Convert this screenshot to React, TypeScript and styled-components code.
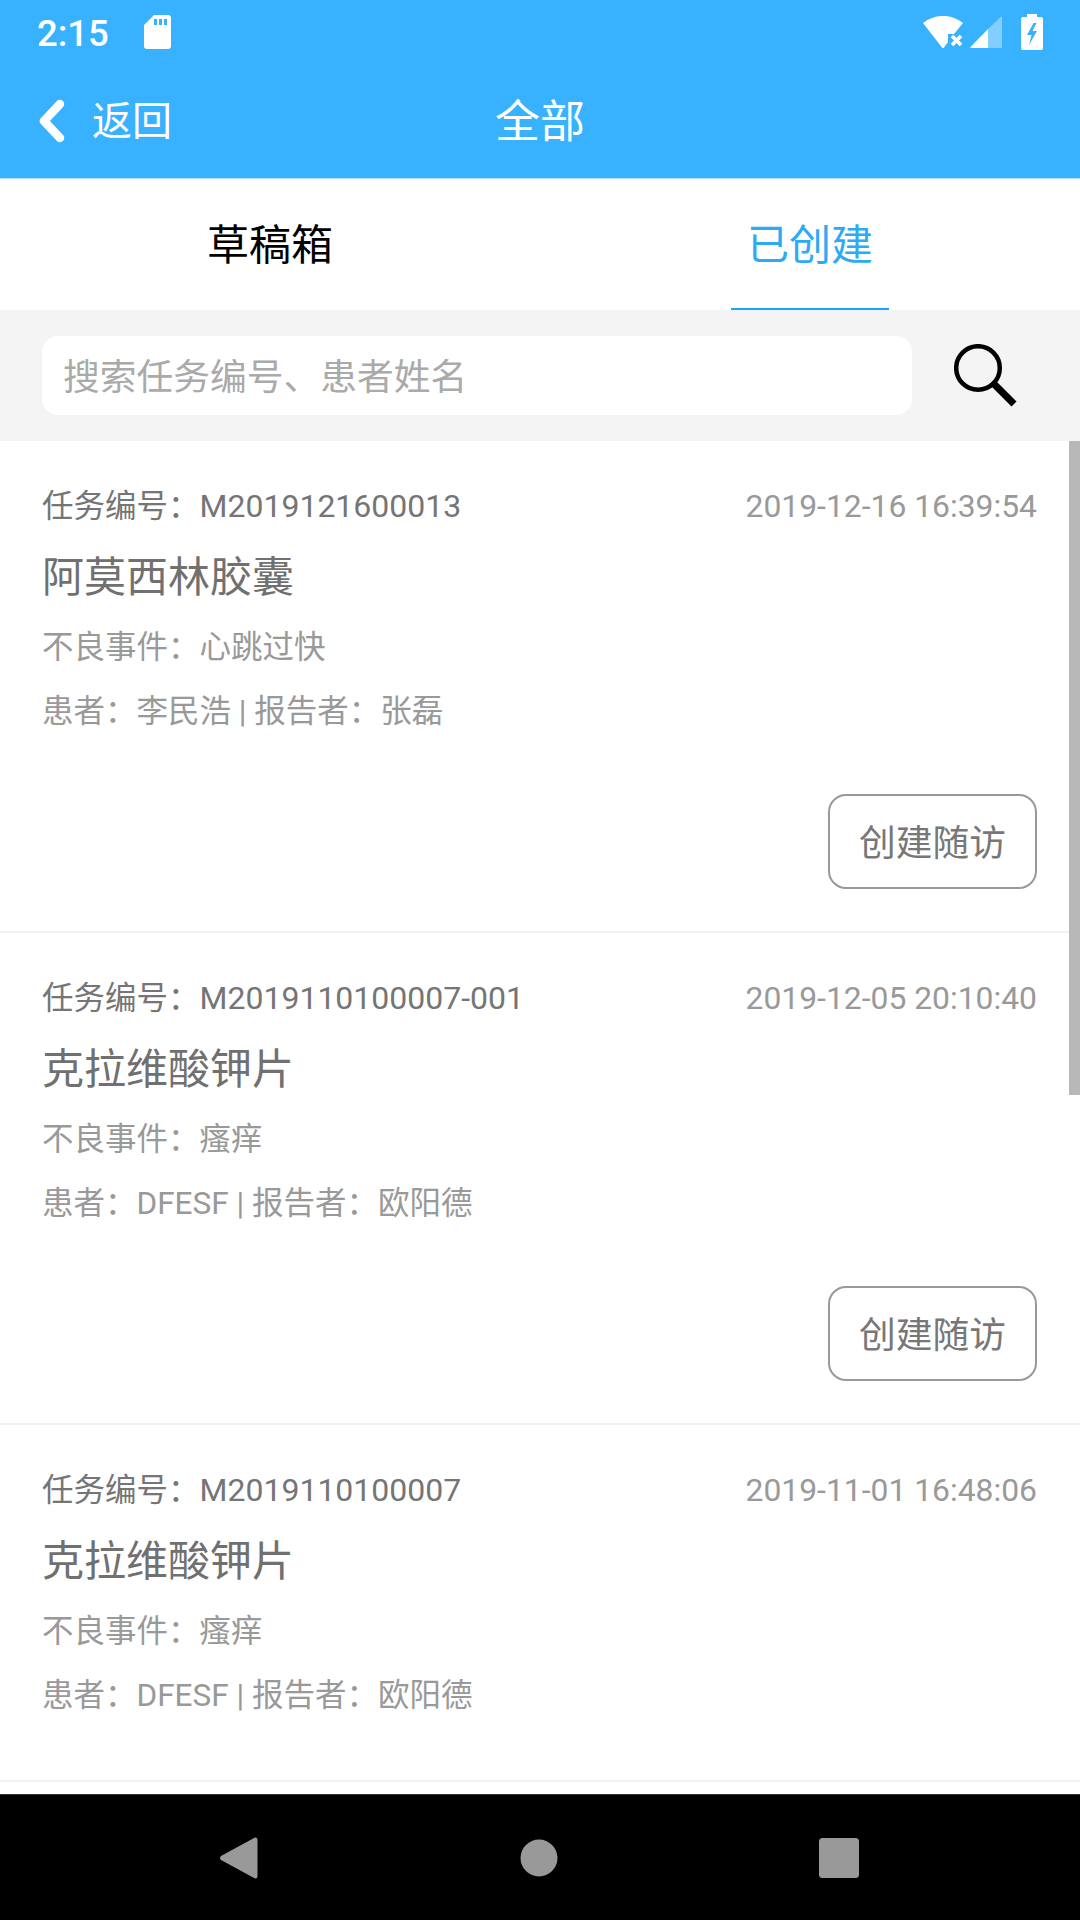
import styled, { createGlobalStyle } from "styled-components";

const GlobalStyle = createGlobalStyle`
  html, body {
    margin: 0;
    padding: 0;
    background: #fff;
  }

  body {
    font-family: Roboto, "Noto Sans CJK SC", sans-serif;
  }
`;

interface Task {
  id: string;
  date: string;
  drug: string;
  event: string;
  patient: string;
  reporter: string;
  followUp: boolean;
}

const tasks: Task[] = [
  {
    id: "M2019121600013",
    date: "2019-12-16 16:39:54",
    drug: "阿莫西林胶囊",
    event: "心跳过快",
    patient: "李民浩",
    reporter: "张磊",
    followUp: true,
  },
  {
    id: "M2019110100007-001",
    date: "2019-12-05 20:10:40",
    drug: "克拉维酸钾片",
    event: "瘙痒",
    patient: "DFESF",
    reporter: "欧阳德",
    followUp: true,
  },
  {
    id: "M2019110100007",
    date: "2019-11-01 16:48:06",
    drug: "克拉维酸钾片",
    event: "瘙痒",
    patient: "DFESF",
    reporter: "欧阳德",
    followUp: false,
  },
];

export default function App() {
  return (
    <Screen lang="zh-CN">
      <GlobalStyle />
      <Header>
        <StatusBar>
          <StatusLeft>
            <Clock>2:15</Clock>
            <SdCardIcon />
          </StatusLeft>
          <StatusRight>
            <WifiIcon />
            <SignalIcon />
            <BatteryIcon />
          </StatusRight>
        </StatusBar>
        <NavBar>
          <BackLink>
            <svg width="30" height="48" viewBox="0 0 30 48">
              <polyline
                points="24,7 8,24 24,41"
                fill="none"
                stroke="#fff"
                strokeWidth="8.5"
                strokeLinecap="round"
                strokeLinejoin="round"
              />
            </svg>
            <BackLabel>返回</BackLabel>
          </BackLink>
          <PageTitle>全部</PageTitle>
          <span />
        </NavBar>
      </Header>

      <Tabs>
        <Tab>
          <TabLabel>草稿箱</TabLabel>
        </Tab>
        <Tab>
          <TabLabel $active>已创建</TabLabel>
        </Tab>
      </Tabs>

      <SearchBar>
        <SearchInput>搜索任务编号、患者姓名</SearchInput>
        <SearchButton>
          <svg width="64" height="64" viewBox="0 0 64 64">
            <circle cx="24" cy="24" r="21.8" fill="none" stroke="#000" strokeWidth="4.5" />
            <line x1="38" y1="38" x2="60" y2="60" stroke="#000" strokeWidth="7" />
          </svg>
        </SearchButton>
      </SearchBar>

      <List>
        {tasks.map((task) => (
          <Card key={task.id} $hasButton={task.followUp}>
            <CardTop>
              <TaskId>
                任务编号：<TaskCode>{task.id}</TaskCode>
              </TaskId>
              <TaskDate>{task.date}</TaskDate>
            </CardTop>
            <DrugName>{task.drug}</DrugName>
            <EventLine>不良事件：{task.event}</EventLine>
            <PeopleLine>
              患者：{task.patient} | 报告者：{task.reporter}
            </PeopleLine>
            {task.followUp && (
              <CardActions>
                <FollowUpButton>创建随访</FollowUpButton>
              </CardActions>
            )}
          </Card>
        ))}
        <ScrollThumb />
      </List>

      <SystemNav>
        <svg width="40" height="44" viewBox="0 0 40 44">
          <path
            d="M36 1.5 Q38.5 1 38.5 4 V40 Q38.5 43 36 42.5 L2 24 Q0 22 2 20 Z"
            fill="#999"
          />
        </svg>
        <svg width="40" height="40" viewBox="0 0 40 40">
          <circle cx="20" cy="20" r="18.5" fill="#999" />
        </svg>
        <svg width="40" height="40" viewBox="0 0 40 40">
          <rect x="0" y="0" width="40" height="40" rx="3.5" fill="#999" />
        </svg>
      </SystemNav>
    </Screen>
  );
}

function SdCardIcon() {
  return (
    <svg width="27" height="34" viewBox="0 0 27 34">
      <path
        fill="#fff"
        fillRule="evenodd"
        d="M10 0 H24 Q27 0 27 3 V31 Q27 34 24 34 H3 Q0 34 0 31 V10 Z M10 4 V10 H13 V4 Z M15 4 V10 H18 V4 Z M20 4 V10 H23 V4 Z"
      />
    </svg>
  );
}

function WifiIcon() {
  return (
    <svg width="42" height="33" viewBox="0 0 42 33">
      <path
        fill="#fff"
        d="M0 7 C12 -2.5 28 -2.5 40 7 L31 18 H25 V26 L21 31.5 Q20 32.5 19 31.5 Z"
      />
      <path d="M29 20 L38 29 M38 20 L29 29" stroke="#fff" strokeWidth="3.6" fill="none" />
    </svg>
  );
}

function SignalIcon() {
  return (
    <svg width="32" height="33" viewBox="0 0 32 33">
      <path fill="#84cdff" d="M31 0.5 Q32 0 32 2 V31 Q32 32 31 32 H18 V13 Z" />
      <path fill="#fff" d="M18 13 V32 H1 Q0 32 0.5 31 Z" />
    </svg>
  );
}

function BatteryIcon() {
  return (
    <BatterySvg width="22" height="36" viewBox="0 0 22 36">
      <path
        fill="#fff"
        d="M6 0 H16 V3 H20 Q22 3 22 5 V34 Q22 36 20 36 H2 Q0 36 0 34 V5 Q0 3 2 3 H6 Z"
      />
      <path fill="#38b1ff" d="M12.5 9 L6 21 H10.5 L8 31 L16 17 H11.5 L15.5 9 Z" />
    </BatterySvg>
  );
}

const Screen = styled.div`
  display: flex;
  flex-direction: column;
  width: 1080px;
  height: 1920px;
  overflow: hidden;
  background: #fff;
`;

const Header = styled.header`
  flex: none;
  height: 179px;
  box-sizing: border-box;
  background: #38b1ff;
  border-bottom: 1px solid #b3dfff;
  color: #fff;
`;

const StatusBar = styled.div`
  display: flex;
  align-items: center;
  justify-content: space-between;
  height: 64px;
  padding: 0 37px;
`;

const StatusLeft = styled.div`
  display: flex;
  align-items: center;
  gap: 35px;
`;

const StatusRight = styled.div`
  display: flex;
  align-items: center;
  gap: 5px;
`;

const BatterySvg = styled.svg`
  margin-left: 14px;
`;

const Clock = styled.span`
  padding-top: 2px;
  font-size: 36.5px;
  font-weight: 500;
`;

const NavBar = styled.div`
  display: grid;
  grid-template-columns: 1fr auto 1fr;
  align-items: center;
  height: 114px;
  padding: 0 36px;
`;

const BackLink = styled.div`
  display: flex;
  align-items: center;
  gap: 26px;
`;

const BackLabel = styled.span`
  padding-top: 2px;
  font-size: 40px;
  line-height: 50px;
`;

const PageTitle = styled.h1`
  margin: 0;
  padding-top: 4px;
  font-size: 45px;
  font-weight: 400;
  line-height: 60px;
`;

const Tabs = styled.nav`
  flex: none;
  display: grid;
  grid-template-columns: 1fr 1fr;
  height: 131px;
`;

const Tab = styled.div`
  display: flex;
  justify-content: center;
`;

const TabLabel = styled.span<{ $active?: boolean }>`
  display: flex;
  align-items: center;
  padding: 0 16px 4px;
  font-size: 42px;
  color: ${(p) => (p.$active ? "#2eaaf5" : "#000")};
  border-bottom: 2px solid ${(p) => (p.$active ? "#18a5fb" : "transparent")};
`;

const SearchBar = styled.div`
  flex: none;
  display: flex;
  align-items: center;
  height: 131px;
  padding: 0 42px;
  background: #f4f4f4;
`;

const SearchInput = styled.div`
  display: flex;
  align-items: center;
  width: 870px;
  height: 79px;
  padding: 0 22px 4px 21px;
  box-sizing: border-box;
  background: #fff;
  border-radius: 16px;
  font-size: 36.75px;
  color: #aaa;
`;

const SearchButton = styled.div`
  display: flex;
  margin-left: 42px;
`;

const List = styled.main`
  position: relative;
  flex: 1;
  min-height: 0;
  overflow: hidden;
`;

const ScrollThumb = styled.div`
  position: absolute;
  top: 0;
  right: 0;
  width: 11px;
  height: 654px;
  background: #b8b8b8;
`;

const Card = styled.article<{ $hasButton: boolean }>`
  padding: 45px 43px ${(p) => (p.$hasButton ? "42px" : "64px")} 42px;
  border-bottom: 2px solid #f2f2f2;
`;

const CardTop = styled.div`
  display: flex;
  justify-content: space-between;
  height: 40px;
  line-height: 40px;
`;

const TaskId = styled.span`
  font-size: 31.5px;
  color: #757575;
`;

const TaskCode = styled.span`
  font-size: 32px;
`;

const TaskDate = styled.span`
  font-size: 31.85px;
  color: #999;
`;

const DrugName = styled.h2`
  margin: 22px 0 0;
  font-size: 42px;
  font-weight: 400;
  line-height: 60px;
  color: #707070;
`;

const EventLine = styled.div`
  margin-top: 20px;
  font-size: 31.5px;
  line-height: 40px;
  color: #999;
`;

const PeopleLine = styled(EventLine)`
  margin-top: 24px;
`;

const CardActions = styled.div`
  display: flex;
  justify-content: flex-end;
  margin-top: 62px;
`;

const FollowUpButton = styled.button`
  width: 209px;
  height: 95px;
  padding: 0 0 3px;
  box-sizing: border-box;
  background: #fff;
  border: 2.5px solid #999;
  border-radius: 18px;
  font-family: inherit;
  font-size: 36.75px;
  color: #777;
`;

const SystemNav = styled.footer`
  flex: none;
  display: flex;
  align-items: center;
  justify-content: center;
  gap: 260px;
  height: 126px;
  padding-right: 3px;
  box-sizing: border-box;
  background: #000;
  border-top: 1px solid #333;
`;
